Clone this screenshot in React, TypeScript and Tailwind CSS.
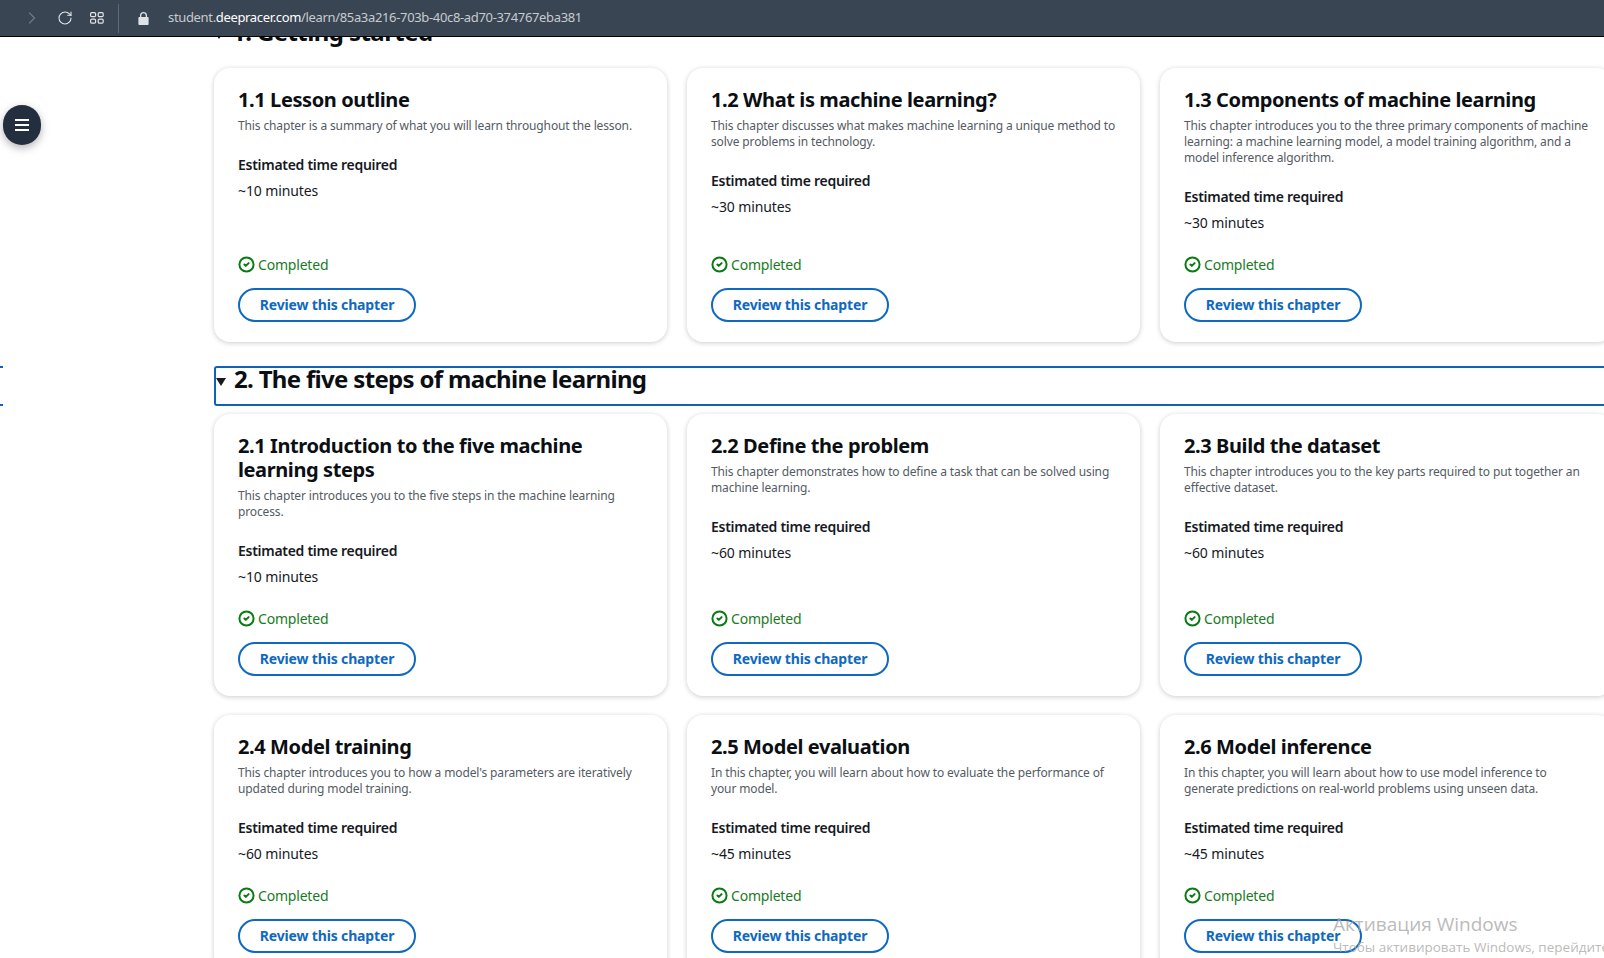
import { ChevronRight, CircleCheck, RotateCw } from "lucide-react";

interface Chapter {
  title: string;
  desc: string;
  time: string;
}

const gettingStarted: Chapter[] = [
  {
    title: "1.1 Lesson outline",
    desc: "This chapter is a summary of what you will learn throughout the lesson.",
    time: "~10 minutes",
  },
  {
    title: "1.2 What is machine learning?",
    desc: "This chapter discusses what makes machine learning a unique method to solve problems in technology.",
    time: "~30 minutes",
  },
  {
    title: "1.3 Components of machine learning",
    desc: "This chapter introduces you to the three primary components of machine learning: a machine learning model, a model training algorithm, and a model inference algorithm.",
    time: "~30 minutes",
  },
];

const fiveSteps: Chapter[] = [
  {
    title: "2.1 Introduction to the five machine learning steps",
    desc: "This chapter introduces you to the five steps in the machine learning process.",
    time: "~10 minutes",
  },
  {
    title: "2.2 Define the problem",
    desc: "This chapter demonstrates how to define a task that can be solved using machine learning.",
    time: "~60 minutes",
  },
  {
    title: "2.3 Build the dataset",
    desc: "This chapter introduces you to the key parts required to put together an effective dataset.",
    time: "~60 minutes",
  },
  {
    title: "2.4 Model training",
    desc: "This chapter introduces you to how a model's parameters are iteratively updated during model training.",
    time: "~60 minutes",
  },
  {
    title: "2.5 Model evaluation",
    desc: "In this chapter, you will learn about how to evaluate the performance of your model.",
    time: "~45 minutes",
  },
  {
    title: "2.6 Model inference",
    desc: "In this chapter, you will learn about how to use model inference to generate predictions on real-world problems using unseen data.",
    time: "~45 minutes",
  },
];

function ChapterCard({ chapter }: { chapter: Chapter }) {
  return (
    <div className="flex flex-col rounded-2xl bg-white px-6 pt-5 pb-5 shadow-[0_1px_5px_rgba(0,28,36,0.22)]">
      <h3 className="text-[20px] leading-6 font-bold text-[#0b0f14] tracking-[-0.4px]">{chapter.title}</h3>
      <p className="mt-1.5 text-[12px] leading-4 text-[#545b64] tracking-[-0.13px]">{chapter.desc}</p>
      <p className="mt-[21px] text-[14px] leading-5 font-semibold text-[#16191f] tracking-[-0.28px]">Estimated time required</p>
      <p className="mt-1.5 mb-[22px] text-[14px] leading-5 text-[#16191f] tracking-[-0.12px]">{chapter.time}</p>
      <div className="mt-auto flex items-center gap-[3px] text-[14px] leading-5 text-[#1a7a1f] tracking-[-0.2px]">
        <CircleCheck size={17} strokeWidth={2.8} className="mb-0.5 text-[#0a7a12]" />
        <span>Completed</span>
      </div>
      <button
        type="button"
        className="mt-[13px] h-[34px] w-[178px] rounded-full border-2 border-[#0f69c0] bg-transparent pb-0.5 text-[14px] font-bold text-[#0f69c0] tracking-[-0.15px]"
      >
        Review this chapter
      </button>
    </div>
  );
}

function Toolbar() {
  return (
    <div className="relative z-10 flex h-[37px] items-center border-b border-black bg-[#3a4553]">
      <ChevronRight size={20} strokeWidth={1.5} className="ml-[22px] text-[#6d7784]" />
      <RotateCw size={16} strokeWidth={1.6} className="ml-[15px] text-[#e3e6e9]" />
      <svg width="14" height="12" viewBox="0 0 14 12" className="ml-[17px] text-[#e3e6e9]" fill="none" stroke="currentColor" strokeWidth="1.2">
        <rect x="0.6" y="0.6" width="5" height="4" rx="1.2" />
        <rect x="8.2" y="0.6" width="5" height="4" rx="1.2" />
        <rect x="0.6" y="7.2" width="5" height="4" rx="1.2" />
        <rect x="8.2" y="7.2" width="5" height="4" rx="1.2" />
      </svg>
      <div className="ml-[14px] h-[29px] w-px bg-[#5f6975]" />
      <svg width="11" height="13" viewBox="0 0 11 13" className="ml-[19px] text-[#dfe2e5]" fill="currentColor">
        <path d="M2 5V3.500a3.500 3.500 0 0 1 7 0V5h.6c.5 0 1 .4 1 1v6c0 .6-.5 1-1 1H1.400c-.5 0-1-.4-1-1V6c0-.6.5-1 1-1H2zm1.300 0h4.400V3.500a2.200 2.200 0 0 0-4.400 0V5z" />
      </svg>
      <p className="ml-[19px] text-[13px] text-[#c6cbd0] tracking-[-0.34px]">
        student.<span className="text-white">deepracer.com</span>/learn/85a3a216-703b-40c8-ad70-374767eba381
      </p>
    </div>
  );
}

export default function App() {
  return (
    <div className="relative h-[958px] w-full overflow-hidden bg-white font-['Noto_Sans','Open_Sans',sans-serif]">
      <Toolbar />

      <div className="-mt-4 ml-[214px] w-[1401px]">
        <h2 className="flex h-10 items-start text-[24px] leading-[22px] font-bold text-[#0b0f14] tracking-[-0.58px]">
          <span className="mt-2.5 mr-2 h-0 w-0 border-x-[5px] border-t-[8px] border-x-transparent border-t-[#16191f]" />
          1. Getting started
        </h2>
        <div className="mt-[7px] grid grid-cols-[453px_453px_453px] gap-x-5">
          {gettingStarted.map((c) => (
            <ChapterCard key={c.title} chapter={c} />
          ))}
        </div>

        <h2 className="mt-6 flex h-10 items-start rounded-[3px] border-2 border-[#0f62b8] text-[24px] leading-[22px] font-bold text-[#0b0f14] tracking-[-0.68px]">
          <span className="mt-2.5 mr-2 h-0 w-0 border-x-[5px] border-t-[8px] border-x-transparent border-t-[#16191f]" />
          2. The five steps of machine learning
        </h2>
        <div className="mt-2 grid grid-cols-[453px_453px_453px] gap-x-5 gap-y-[19px]">
          {fiveSteps.map((c) => (
            <ChapterCard key={c.title} chapter={c} />
          ))}
        </div>
      </div>

      {/* floating menu button */}
      <button
        type="button"
        className="absolute top-[105px] left-[3px] flex h-10 w-[38px] flex-col items-center justify-center gap-[3px] rounded-full bg-[#232f3e] shadow-[0_3px_8px_rgba(0,0,0,0.3)]"
      >
        <span className="h-0.5 w-3.5 bg-white" />
        <span className="h-0.5 w-3.5 bg-white" />
        <span className="h-0.5 w-3.5 bg-white" />
      </button>

      {/* clipped focus marks at the left edge */}
      <div className="absolute top-[366px] left-0 h-0.5 w-[3px] bg-[#0f62b8]" />
      <div className="absolute top-[404px] left-0 h-0.5 w-[3px] bg-[#0f62b8]" />

      {/* windows activation watermark */}
      <div className="pointer-events-none absolute top-[911px] left-[1333px] whitespace-nowrap font-['Open_Sans',sans-serif] text-[#a8a8a8]/80">
        <p className="text-[19px] leading-[26px]">Активация Windows</p>
        <p className="mt-[1px] text-[13.500px] leading-[18px]">Чтобы активировать Windows, перейдите</p>
      </div>
    </div>
  );
}
